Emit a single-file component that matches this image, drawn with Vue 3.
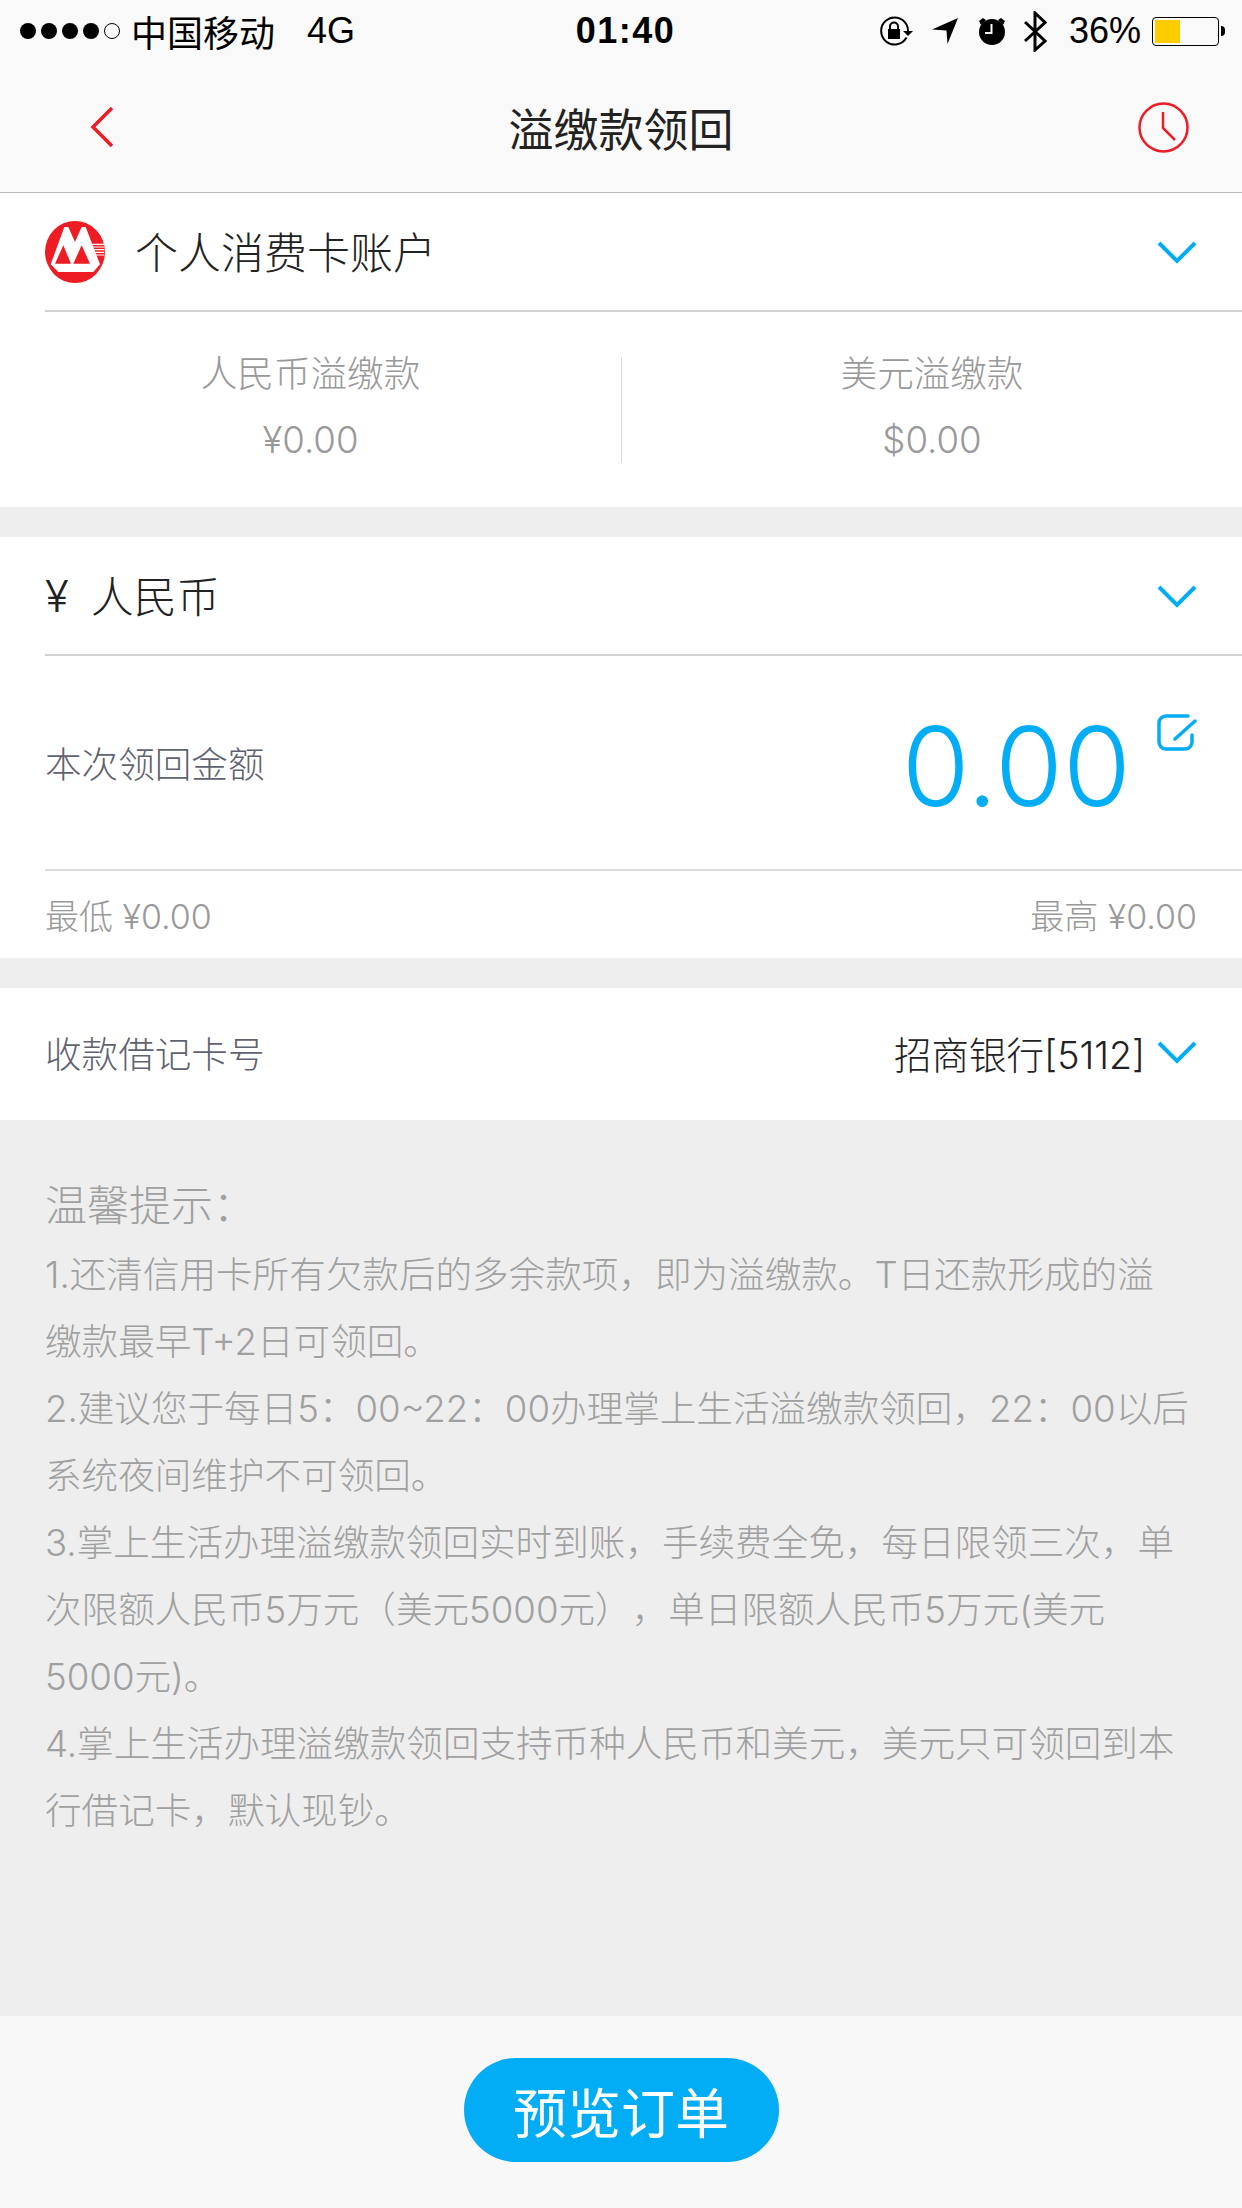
<template>
  <div class="page">
    <!-- Status bar -->
    <div class="status-bar">
      <div class="status-left">
        <span class="signal">
          <i v-for="n in 4" :key="n" class="dot"></i>
          <i class="dot empty"></i>
        </span>
        <span class="carrier">中国移动</span>
        <span class="network">4G</span>
      </div>
      <div class="status-time">01:40</div>
      <div class="status-right">
        <svg class="ic-lock" viewBox="0 0 34 30" width="34" height="30">
          <path d="M27.500 21.500A13.500 13.500 0 1 1 27.500 8.500Q29 11 29 15" fill="none" stroke="#000" stroke-width="2" />
          <path d="M24 15h10l-5 5z" fill="#000" />
          <rect x="9" y="13" width="12" height="10" fill="#000" />
          <path d="M11 13v-2.500a4 4 0 0 1 8 0v2.500" fill="none" stroke="#000" stroke-width="2" />
        </svg>
        <svg class="ic-loc" viewBox="0 0 26 26" width="26" height="26">
          <path d="M26 0L0 11.500l14.500 1L15.500 26z" fill="#000" />
        </svg>
        <svg class="ic-alarm" viewBox="0 0 28 28" width="28" height="28">
          <circle cx="14" cy="15" r="13" fill="#000" />
          <path d="M1 4l4-3 3 2-5 5zM27 4l-4-3-3 2 5 5z" fill="#000" />
          <path d="M13.500 7v9H7" fill="none" stroke="#f9f9f9" stroke-width="2" />
        </svg>
        <svg class="ic-bt" viewBox="0 0 23 41" width="23" height="41">
          <path d="M1 11l20 19-10 9V2l10 9.500L1 30" fill="none" stroke="#000" stroke-width="3" />
        </svg>
        <span class="percent">36%</span>
        <span class="battery"><i class="battery-fill"></i></span>
        <i class="battery-tip"></i>
      </div>
    </div>

    <!-- Nav bar -->
    <header class="nav-bar">
      <svg class="nav-back" viewBox="0 0 24 42" width="24" height="42">
        <path d="M22 2L3 21l19 19" fill="none" stroke="#ee1c25" stroke-width="3.500" />
      </svg>
      <h1 class="nav-title">溢缴款领回</h1>
      <svg class="nav-clock" viewBox="0 0 51 51" width="51" height="51">
        <circle cx="25.500" cy="25.500" r="24" fill="none" stroke="#ee1c25" stroke-width="2.500" />
        <path d="M25 10v16l12 12" fill="none" stroke="#ee1c25" stroke-width="2.500" />
      </svg>
    </header>

    <!-- Account -->
    <section class="card">
      <div class="row row-head">
        <div class="row-main">
          <svg class="logo" viewBox="0 0 180 186" width="60" height="62">
            <ellipse cx="90" cy="93" rx="90" ry="93" fill="#ee1c25" />
            <path d="M17 130L58 18h12l20 45 20-45h12l43 112-20 23H40z" fill="#fff" />
            <path d="M30 128l25-55 23 55zM85 128l25-55 25 55z" fill="#ee1c25" />
            <path d="M136 70h42M136 78h42M136 86h42M136 94h42M136 102h42" stroke="#fff" stroke-width="3.500" />
          </svg>
          <span class="head-text">个人消费卡账户</span>
        </div>
        <svg class="chevron" viewBox="0 0 40 24" width="40" height="24">
          <path d="M2 3l18 18L38 3" fill="none" stroke="#02adf5" stroke-width="4" />
        </svg>
      </div>
      <div class="balance">
        <div class="balance-col">
          <span>人民币溢缴款</span>
          <span>¥0.00</span>
        </div>
        <div class="balance-col second">
          <span>美元溢缴款</span>
          <span>$0.00</span>
        </div>
      </div>
    </section>

    <!-- Currency and amount -->
    <section class="card gap-top">
      <div class="row row-head">
        <div class="row-main">
          <span class="yen-mark">¥</span>
          <span class="head-text">人民币</span>
        </div>
        <svg class="chevron" viewBox="0 0 40 24" width="40" height="24">
          <path d="M2 3l18 18L38 3" fill="none" stroke="#02adf5" stroke-width="4" />
        </svg>
      </div>
      <div class="row row-amount">
        <span class="label">本次领回金额</span>
        <div class="amount-wrap">
          <span class="amount">0.00</span>
          <svg class="edit" viewBox="0 0 40 37" width="40" height="37">
            <path d="M31 2H9a7 7 0 0 0-7 7v19a7 7 0 0 0 7 7h19a7 7 0 0 0 7-7v-7" fill="none" stroke="#02adf5" stroke-width="3.500" stroke-linecap="round" />
            <path d="M18 25L38 7" fill="none" stroke="#02adf5" stroke-width="3.500" stroke-linecap="round" />
          </svg>
        </div>
      </div>
      <div class="limits">
        <span>最低 ¥0.00</span>
        <span>最高 ¥0.00</span>
      </div>
    </section>

    <!-- Debit card -->
    <section class="card gap-top">
      <div class="row-card">
        <span class="label">收款借记卡号</span>
        <div class="card-value">
          <span>招商银行[5112]</span>
          <svg class="chevron" viewBox="0 0 40 24" width="40" height="24">
            <path d="M2 3l18 18L38 3" fill="none" stroke="#02adf5" stroke-width="4" />
          </svg>
        </div>
      </div>
    </section>

    <!-- Tips -->
    <section class="tips">
      <p class="tips-title">温馨提示：</p>
      <p v-for="line in tipLines" :key="line">{{ line }}</p>
    </section>

    <!-- Footer -->
    <footer class="footer">
      <button type="button" class="btn-preview">预览订单</button>
    </footer>
  </div>
</template>

<script setup>
// Line breaks follow the reference
const tipLines = [
  '1.还清信用卡所有欠款后的多余款项，即为溢缴款。T日还款形成的溢',
  '缴款最早T+2日可领回。',
  '2.建议您于每日5：00~22：00办理掌上生活溢缴款领回，22：00以后',
  '系统夜间维护不可领回。',
  '3.掌上生活办理溢缴款领回实时到账，手续费全免，每日限领三次，单',
  '次限额人民币5万元（美元5000元），单日限额人民币5万元(美元',
  '5000元)。',
  '4.掌上生活办理溢缴款领回支持币种人民币和美元，美元只可领回到本',
  '行借记卡，默认现钞。',
]
</script>

<style>
html,
body {
  margin: 0;
  background: #eeeeee;
}
</style>

<style scoped>
.page {
  width: 1242px;
  height: 2208px;
  display: flex;
  flex-direction: column;
  background: #eeeeee;
  font-family: Inter, 'Noto Sans CJK SC', sans-serif;
  font-weight: 300;
  overflow: hidden;
}

.status-bar {
  height: 62px;
  padding: 0 17px 0 20px;
  display: grid;
  grid-template-columns: 1fr auto 1fr;
  align-items: center;
  background: #f9f9f9;
  color: #000;
  font-family: 'Liberation Sans', 'Noto Sans CJK SC', sans-serif;
  font-weight: 400;
  font-size: 36px;
}

.status-left {
  display: flex;
  align-items: center;
}

.signal {
  display: flex;
  gap: 5px;
  margin-right: 11px;
}

.dot {
  width: 16px;
  height: 16px;
  border-radius: 50%;
  background: #000;
}

.dot.empty {
  box-sizing: border-box;
  background: none;
  border: 1.500px solid #000;
}

.network {
  margin-left: 32px;
}

.status-time {
  margin-left: 6px;
  font-weight: 700;
  letter-spacing: 1.500px;
}

.status-right {
  display: flex;
  align-items: center;
  justify-content: flex-end;
}

.ic-lock {
  margin-right: 19px;
}

.ic-loc {
  margin-right: 20px;
}

.ic-alarm {
  margin-right: 18px;
}

.ic-bt {
  margin-right: 22px;
}

.percent {
  margin-right: 11px;
}

.battery {
  box-sizing: border-box;
  width: 67px;
  height: 29px;
  padding: 2px;
  display: flex;
  border: 1.500px solid #000;
  border-radius: 4px;
}

.battery-fill {
  width: 25px;
  background: #ffcc00;
}

.battery-tip {
  width: 4px;
  height: 10px;
  margin-left: 2px;
  background: #000;
  border-radius: 0 5px 5px 0;
}

.nav-bar {
  height: 131px;
  box-sizing: border-box;
  padding: 0 53px;
  display: grid;
  grid-template-columns: 1fr auto 1fr;
  align-items: center;
  background: #f9f9f9;
  border-bottom: 1px solid #b8b8b8;
}

.nav-back {
  margin-left: 37px;
}

.nav-clock {
  justify-self: end;
}

.nav-title {
  margin: 0;
  font-size: 45px;
  font-weight: 400;
  color: #222;
}

.card {
  background: #fff;
}

.gap-top {
  margin-top: 30px;
}

.row {
  margin-left: 45px;
  padding-right: 45px;
  display: flex;
  align-items: center;
  justify-content: space-between;
}

.row-head {
  height: 119px;
  box-sizing: border-box;
  border-bottom: 2px solid #d4d4d4;
}

.row-main {
  display: flex;
  align-items: center;
}

.logo {
  margin-right: 30px;
}

.head-text {
  margin-bottom: 4px;
  font-size: 43px;
  color: #222;
}

.yen-mark {
  margin-right: 22px;
  font-size: 44px;
  color: #222;
}

.balance {
  height: 195px;
  display: grid;
  grid-template-columns: 621px 1fr;
  align-items: center;
  color: #999;
  font-size: 36.600px;
  line-height: 44px;
}

.balance-col {
  height: 106px;
  box-sizing: border-box;
  padding-bottom: 6px;
  display: flex;
  flex-direction: column;
  align-items: center;
  justify-content: center;
  gap: 22px;
}

.balance-col.second {
  border-left: 1px solid #d9d9d9;
}

.row-amount {
  height: 215px;
  box-sizing: border-box;
  border-bottom: 2px solid #dcdcdc;
}

.label {
  font-size: 36.600px;
  color: #5f6370;
}

.amount-wrap {
  padding-top: 7px;
  display: flex;
  align-items: flex-start;
  gap: 26px;
}

.amount {
  font-size: 110px;
  line-height: 1;
  color: #02adf5;
}

.edit {
  margin-top: 3px;
}

.limits {
  height: 87px;
  padding: 0 45px;
  display: flex;
  align-items: center;
  justify-content: space-between;
  font-size: 34px;
  color: #999;
}

.row-card {
  height: 132px;
  box-sizing: border-box;
  padding: 0 45px 4px;
  display: flex;
  align-items: center;
  justify-content: space-between;
}

.card-value {
  display: flex;
  align-items: center;
  gap: 12px;
  font-size: 37.500px;
  color: #222;
}

.tips {
  flex: 1;
  box-sizing: border-box;
  padding: 52px 45px 0 45px;
  font-size: 36.600px;
  line-height: 67px;
  color: #a0a0a0;
  text-spacing-trim: space-all;
  white-space: nowrap;
}

.tips p {
  margin: 0;
}

.tips .tips-title {
  margin-bottom: 3px;
  font-size: 42px;
}

.footer {
  height: 192px;
  box-sizing: border-box;
  padding-bottom: 4px;
  display: flex;
  align-items: center;
  justify-content: center;
  background: #f8f8f8;
}

.btn-preview {
  width: 315px;
  height: 104px;
  border: none;
  border-radius: 52px;
  background: #02adf5;
  color: #fff;
  font-family: inherit;
  font-size: 54px;
}
</style>
